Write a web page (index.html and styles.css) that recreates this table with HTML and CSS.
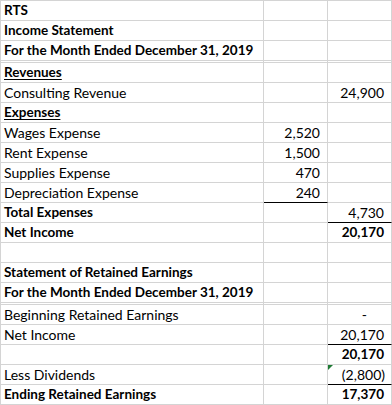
FILE: index.html
```html
<!DOCTYPE html>
<html>
<head>
<meta charset="utf-8">
<link rel="stylesheet" href="styles.css">
</head>
<body>
<div class="sheet">
  <div class="c b">RTS</div><div class="c"></div><div class="c"></div>
  <div class="c b">Income Statement</div><div class="c"></div><div class="c"></div>
  <div class="c b">For the Month Ended December 31, 2019</div><div class="c"></div><div class="c"></div>
  <div class="c gap"></div><div class="c gap"></div><div class="c gap"></div>
  <div class="c b u">Revenues</div><div class="c"></div><div class="c"></div>
  <div class="c">Consulting Revenue</div><div class="c"></div><div class="c n">24,900</div>
  <div class="c b u">Expenses</div><div class="c"></div><div class="c"></div>
  <div class="c">Wages Expense</div><div class="c n">2,520</div><div class="c"></div>
  <div class="c">Rent Expense</div><div class="c n">1,500</div><div class="c"></div>
  <div class="c">Supplies Expense</div><div class="c n">470</div><div class="c"></div>
  <div class="c">Depreciation Expense</div><div class="c n line">240</div><div class="c"></div>
  <div class="c b">Total Expenses</div><div class="c"></div><div class="c n line">4,730</div>
  <div class="c b">Net Income</div><div class="c"></div><div class="c n b">20,170</div>
  <div class="c"></div><div class="c"></div><div class="c"></div>
  <div class="c b">Statement of Retained Earnings</div><div class="c"></div><div class="c"></div>
  <div class="c b">For the Month Ended December 31, 2019</div><div class="c"></div><div class="c"></div>
  <div class="c gap"></div><div class="c gap"></div><div class="c gap"></div>
  <div class="c">Beginning Retained Earnings</div><div class="c"></div><div class="c n zero">-</div>
  <div class="c">Net Income</div><div class="c"></div><div class="c n line">20,170</div>
  <div class="c"></div><div class="c"></div><div class="c n b">20,170</div>
  <div class="c">Less Dividends</div><div class="c"></div><div class="c n neg line flag">(2,800)</div>
  <div class="c b">Ending Retained Earnings</div><div class="c"></div><div class="c n b">17,370</div>
</div>
</body>
</html>
```

FILE: styles.css
```css
html, body {
  margin: 0;
  padding: 0;
  background: #ffffff;
}

.sheet {
  display: grid;
  grid-template-columns: 263px 64px 64px;
  width: 391px;
  border-left: 1px solid #d4d4d4;
  border-top: 1px solid #d4d4d4;
  font-family: Lato, "Open Sans", sans-serif;
  font-size: 14px;
  color: #000;
}

.c {
  box-sizing: border-box;
  height: 20px;
  border-right: 1px solid #d4d4d4;
  border-bottom: 1px solid #d4d4d4;
  line-height: 19px;
  padding: 0 3px;
  white-space: nowrap;
  position: relative;
}

.gap {
  height: 2px;
}

.b {
  font-weight: 700;
  font-size: 13.5px;
}

.u {
  text-decoration: underline;
  text-decoration-thickness: 1px;
  text-underline-offset: 2px;
}

.n {
  text-align: right;
  padding-right: 7px;
}

.neg {
  padding-right: 6px;
}

.zero {
  padding-right: 24px;
}

.line {
  border-bottom-color: #000;
}

.flag::before {
  content: "";
  position: absolute;
  left: 0;
  top: 0;
  border-top: 5px solid #1e7b34;
  border-right: 5px solid transparent;
}
```
